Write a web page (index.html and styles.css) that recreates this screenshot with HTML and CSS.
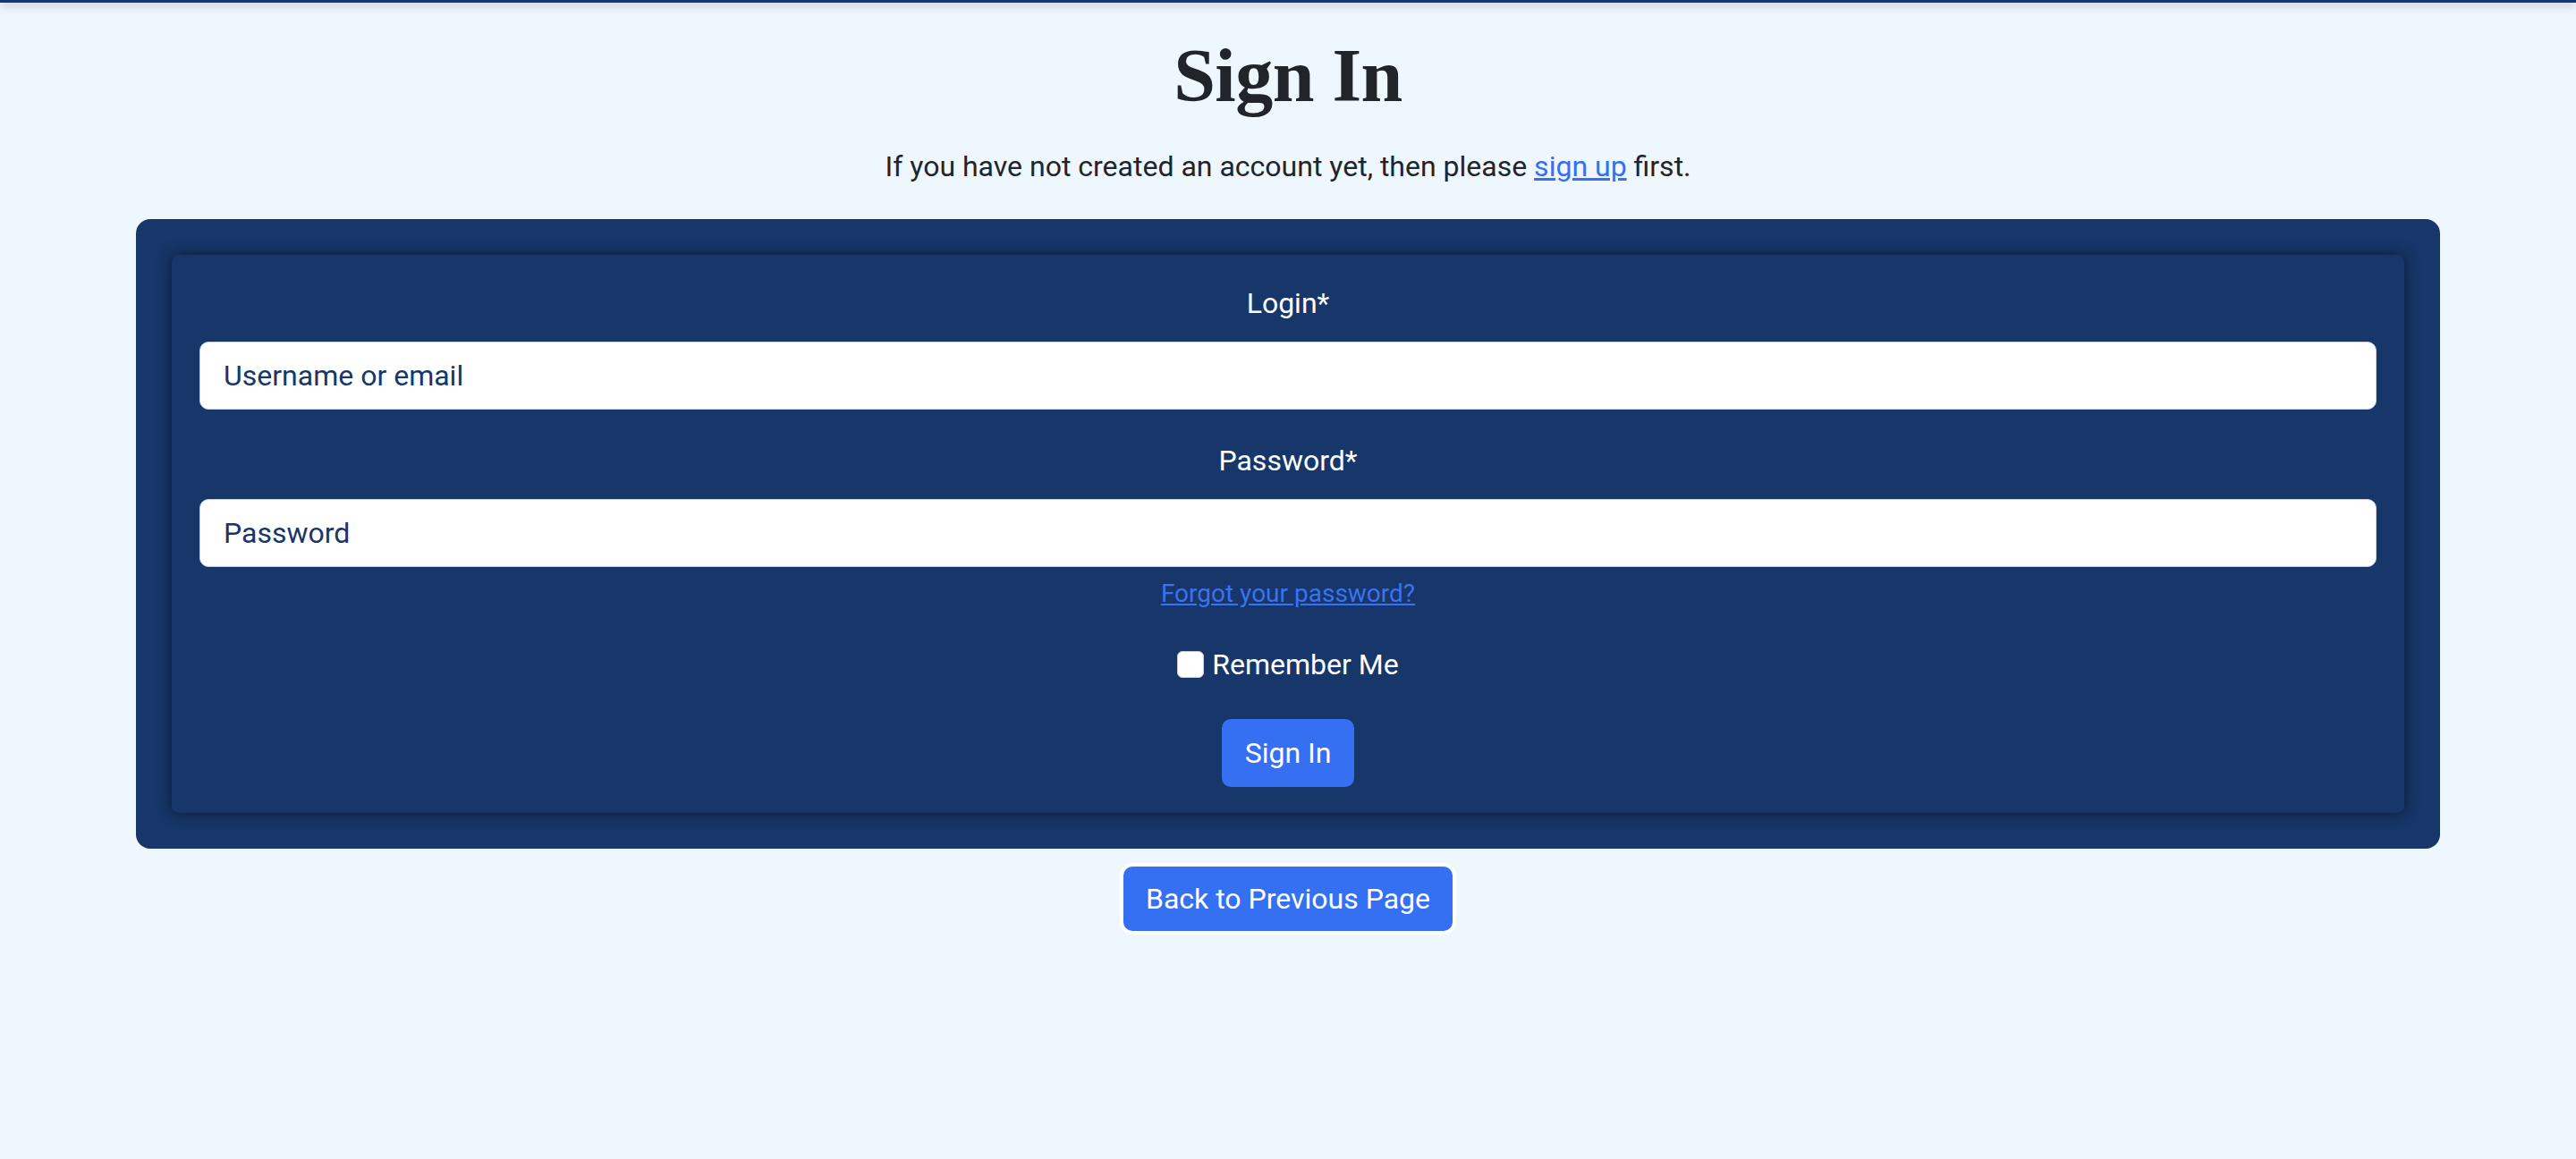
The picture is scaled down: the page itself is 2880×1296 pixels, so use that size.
FILE: index.html
```html
<!DOCTYPE html>
<html lang="en">
<head>
<meta charset="utf-8">
<title>Sign In</title>
<link rel="stylesheet" href="styles.css">
</head>
<body>
<div class="topbar"></div>
<main class="page">
  <h1 class="title">Sign In</h1>
  <p class="intro">If you have not created an account yet, then please <a href="#" class="intro-link">sign up</a> first.</p>
  <section class="outer-card">
    <form class="inner-card">
      <label class="field-label" for="login">Login*</label>
      <input class="field-input" id="login" type="text" placeholder="Username or email">
      <label class="field-label" for="password">Password*</label>
      <input class="field-input field-input-last" id="password" type="password" placeholder="Password">
      <a href="#" class="forgot">Forgot your password?</a>
      <label class="remember"><span class="checkbox"></span><span>Remember Me</span></label>
      <button type="button" class="btn">Sign In</button>
    </form>
  </section>
  <div class="back-wrap">
    <button type="button" class="btn btn-back">Back to Previous Page</button>
  </div>
</main>
</body>
</html>
```
FILE: styles.css
```css
html, body {
  margin: 0;
  padding: 0;
}
body {
  background: #eef6fe;
  font-family: Roboto, "Liberation Sans", Arial, sans-serif;
  color: #212529;
  min-height: 1296px;
}
.topbar {
  height: 3px;
  background: #173669;
  box-shadow: 0 3px 10px rgba(0, 0, 0, 0.35);
}
.page {
  display: flex;
  flex-direction: column;
  align-items: center;
}
.title {
  margin: 32px 0 0;
  font-family: "Liberation Serif", "DejaVu Serif", serif;
  font-weight: 700;
  font-size: 84px;
  line-height: 1.2;
  color: #212529;
  letter-spacing: -0.5px;
}
.intro {
  margin: 26px 0 0;
  font-size: 32px;
  line-height: 1.5;
}
.intro-link {
  color: #3570f2;
  text-decoration: underline;
}
.outer-card {
  box-sizing: border-box;
  align-self: stretch;
  margin: 35px 152px 0;
  padding: 40px;
  background: #173669;
  border-radius: 16px;
}
.inner-card {
  box-sizing: border-box;
  display: flex;
  flex-direction: column;
  align-items: center;
  padding: 30px 31px 29px;
  background: #173669;
  border-radius: 8px;
  box-shadow: 0 0 16px rgba(0, 0, 0, 0.55);
}
.field-label {
  font-size: 32px;
  line-height: 1.5;
  color: #ffffff;
  margin-bottom: 19px;
}
.field-input {
  box-sizing: border-box;
  width: 100%;
  height: 76px;
  margin: 0 0 33px;
  padding: 0 26px;
  border: 1px solid #c9cfdb;
  border-radius: 10px;
  background: #ffffff;
  font-family: Roboto, "Liberation Sans", Arial, sans-serif;
  font-size: 32px;
  color: #173669;
  outline: none;
}
.field-input::placeholder {
  color: #173669;
  opacity: 1;
}
.field-input-last {
  margin-bottom: 9px;
}
.forgot {
  font-size: 28px;
  line-height: 1.5;
  color: #3a72f0;
  text-decoration: underline;
}
.remember {
  display: flex;
  align-items: center;
  gap: 9px;
  margin-top: 34px;
  font-size: 32px;
  line-height: 1.5;
  color: #ffffff;
}
.checkbox {
  box-sizing: border-box;
  width: 30px;
  height: 30px;
  border-radius: 6px;
  background: #ffffff;
  border: 1px solid #c7ccd6;
}
.btn {
  box-sizing: border-box;
  height: 76px;
  padding: 0 26px;
  margin-top: 37px;
  border: none;
  border-radius: 10px;
  background: #3570f2;
  color: #ffffff;
  font-family: Roboto, "Liberation Sans", Arial, sans-serif;
  font-size: 32px;
  line-height: 1;
}
.back-wrap {
  margin-top: 20px;
}
.btn-back {
  margin-top: 0;
  height: 72px;
  padding: 0 25px;
  box-shadow: 0 0 0 4px #ffffff;
}
```
